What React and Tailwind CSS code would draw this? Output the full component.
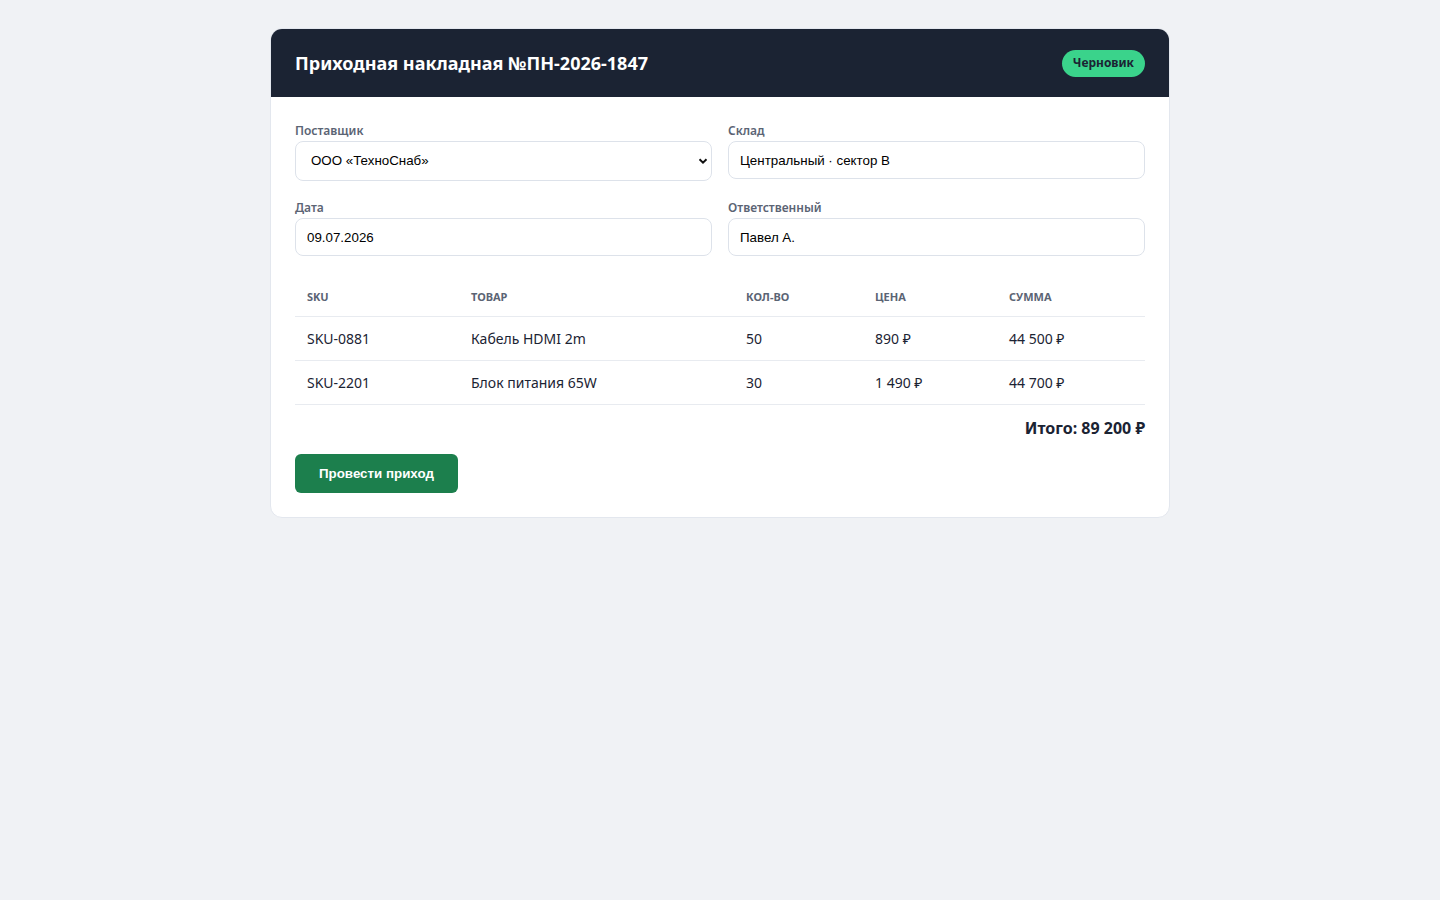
const rows = [
  { sku: 'SKU-0881', name: 'Кабель HDMI 2m', qty: '50', price: '890 ₽', sum: '44 500 ₽' },
  { sku: 'SKU-2201', name: 'Блок питания 65W', qty: '30', price: '1 490 ₽', sum: '44 700 ₽' },
]

function Field({ label, children }) {
  return (
    <label className="flex flex-col">
      <span className="text-xs leading-5 font-semibold text-[#5b6474]">{label}</span>
      {children}
    </label>
  )
}

const inputCls =
  "h-[38px] w-full rounded-lg border border-[#dde2ea] bg-white px-[11px] text-[13.33px] text-black font-['Liberation_Sans',sans-serif] outline-none"

const thCls = 'px-3 py-[11px] text-[11px] leading-4 font-bold uppercase text-[#5b6474]'

export default function App() {
  return (
    <div className="min-h-screen bg-[#f0f2f5] pt-7 font-['Noto_Sans',sans-serif]">
      <div className="mx-auto w-[900px] overflow-hidden rounded-xl border border-[#e3e7ee] bg-white">
        {/* шапка */}
        <div className="flex h-[68px] items-center justify-between bg-[#1b2333] px-6">
          <h1 className="text-lg font-bold text-white">Приходная накладная №ПН-2026-1847</h1>
          <span className="flex h-[27px] items-center rounded-full bg-[#3ad38b] px-[11px] text-xs font-bold text-[#1b2333]">
            Черновик
          </span>
        </div>

        <div className="px-6 pt-6 pb-6">
          <div className="grid grid-cols-2 gap-x-4 gap-y-[17px]">
            <Field label="Поставщик">
              <div className="relative">
                <select
                  defaultValue="ts"
                  className="h-10 w-full appearance-none rounded-lg border border-[#dde2ea] bg-white pl-[15px] pr-8 text-[13.33px] text-black font-['Liberation_Sans',sans-serif] outline-none"
                >
                  <option value="ts">ООО «ТехноСнаб»</option>
                </select>
                <svg
                  className="pointer-events-none absolute right-[3px] top-1/2 -translate-y-1/2"
                  width="12"
                  height="12"
                  viewBox="0 0 12 12"
                >
                  <path d="M2.5 4.2 6 7.6 9.5 4.2" fill="none" stroke="#111" strokeWidth="2" />
                </svg>
              </div>
            </Field>
            <Field label="Склад">
              <input className={inputCls} defaultValue="Центральный · сектор B" />
            </Field>
            <Field label="Дата">
              <input className={inputCls} defaultValue="09.07.2026" />
            </Field>
            <Field label="Ответственный">
              <input className={inputCls} defaultValue="Павел А." />
            </Field>
          </div>

          <table className="mt-[22px] w-full border-collapse text-left">
            <thead>
              <tr className="border-b border-[#e8ebf0]">
                <th className={`w-[164px] ${thCls}`}>SKU</th>
                <th className={`w-[275px] ${thCls}`}>Товар</th>
                <th className={`w-[129px] ${thCls}`}>Кол-во</th>
                <th className={`w-[134px] ${thCls}`}>Цена</th>
                <th className={thCls}>Сумма</th>
              </tr>
            </thead>
            <tbody>
              {rows.map((r) => (
                <tr key={r.sku} className="border-b border-[#e8ebf0] text-sm text-[#1b2333]">
                  <td className="h-11 px-3">{r.sku}</td>
                  <td className="h-11 px-3">{r.name}</td>
                  <td className="h-11 px-3">{r.qty}</td>
                  <td className="h-11 px-3">{r.price}</td>
                  <td className="h-11 px-3">{r.sum}</td>
                </tr>
              ))}
            </tbody>
          </table>

          <div className="mt-[11px] text-right text-base leading-6 font-bold text-[#1b2333]">Итого: 89 200 ₽</div>

          <button
            type="button"
            className="mt-[14px] h-[39px] rounded-md bg-[#1c7f4d] px-6 text-[13.33px] font-bold text-white font-['Liberation_Sans',sans-serif]"
          >
            Провести приход
          </button>
        </div>
      </div>
    </div>
  )
}
